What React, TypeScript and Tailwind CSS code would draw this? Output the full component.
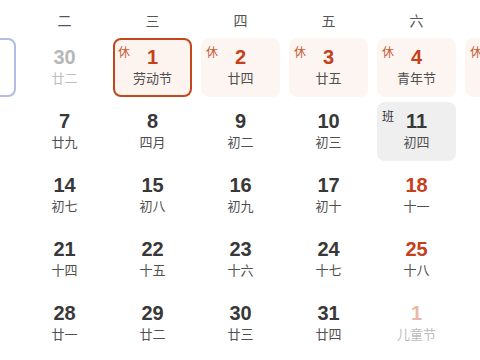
import React from 'react';

type Day = {
  num: string;
  lunar: string;
  tag?: '休' | '班';
  kind?: 'selected' | 'today' | 'holiday' | 'work' | 'other';
  red?: boolean;
};

const weekNames = ['一', '二', '三', '四', '五', '六', '日'];

const rows: Day[][] = [
  [
    { num: '29', lunar: '廿一', kind: 'today' },
    { num: '30', lunar: '廿二', kind: 'other' },
    { num: '1', lunar: '劳动节', tag: '休', kind: 'selected', red: true },
    { num: '2', lunar: '廿四', tag: '休', kind: 'holiday', red: true },
    { num: '3', lunar: '廿五', tag: '休', kind: 'holiday', red: true },
    { num: '4', lunar: '青年节', tag: '休', kind: 'holiday', red: true },
    { num: '5', lunar: '立夏', tag: '休', kind: 'holiday', red: true },
  ],
  [
    { num: '6', lunar: '廿八' },
    { num: '7', lunar: '廿九' },
    { num: '8', lunar: '四月' },
    { num: '9', lunar: '初二' },
    { num: '10', lunar: '初三' },
    { num: '11', lunar: '初四', tag: '班', kind: 'work' },
    { num: '12', lunar: '母亲节', red: true },
  ],
  [
    { num: '13', lunar: '初六' },
    { num: '14', lunar: '初七' },
    { num: '15', lunar: '初八' },
    { num: '16', lunar: '初九' },
    { num: '17', lunar: '初十' },
    { num: '18', lunar: '十一', red: true },
    { num: '19', lunar: '十二', red: true },
  ],
  [
    { num: '20', lunar: '小满' },
    { num: '21', lunar: '十四' },
    { num: '22', lunar: '十五' },
    { num: '23', lunar: '十六' },
    { num: '24', lunar: '十七' },
    { num: '25', lunar: '十八', red: true },
    { num: '26', lunar: '十九', red: true },
  ],
  [
    { num: '27', lunar: '二十' },
    { num: '28', lunar: '廿一' },
    { num: '29', lunar: '廿二' },
    { num: '30', lunar: '廿三' },
    { num: '31', lunar: '廿四' },
    { num: '1', lunar: '儿童节', kind: 'other', red: true },
    { num: '2', lunar: '廿六', kind: 'other', red: true },
  ],
];

const cardStyle: Record<string, string> = {
  selected: 'border-[#c4461c] bg-[#fdf4ef]',
  today: 'border-[#b3bce6] bg-white',
  holiday: 'border-transparent bg-[#fdf5f1]',
  work: 'border-transparent bg-[#efefef]',
  other: 'border-transparent bg-white',
  none: 'border-transparent bg-white',
};

const DayCell = ({ d }: { d: Day }) => {
  const kind = d.kind ?? 'none';
  let numColor = d.red ? 'text-[#c6401b]' : 'text-[#383838]';
  let lunarColor = 'text-[#4f4f4f]';
  if (kind === 'other') {
    numColor = d.red ? 'text-[#eab8ab]' : 'text-[#b8b8b8]';
    lunarColor = 'text-[#bdbdbd]';
  }
  return (
    <div className={`relative h-[59px] rounded-lg border-2 ${cardStyle[kind]} flex flex-col items-center pt-[5px]`}>
      {d.tag && (
        <span
          className={`absolute left-[3px] top-[6px] text-[12px] leading-[14px] ${
            d.tag === '休' ? 'text-[#c55a36]' : 'text-[#333]'
          }`}
        >
          {d.tag}
        </span>
      )}
      <span className={`text-[20px] leading-[24px] font-bold ${numColor}`}>{d.num}</span>
      <span className={`text-[13px] leading-[20px] ${lunarColor}`}>{d.lunar}</span>
    </div>
  );
};

export default function App() {
  return (
    <div
      className="w-[480px] h-[360px] overflow-hidden bg-white"
      style={{ fontFamily: '"Liberation Sans", "Noto Sans CJK SC", sans-serif' }}
    >
      <div className="ml-[-63px] w-[607px]">
        <div className="grid grid-cols-[repeat(7,79px)] gap-x-[9px] h-[38px] pt-[11px]">
          {weekNames.map((w) => (
            <div key={w} className="text-center text-[14px] leading-[20px] text-[#555]">
              {w}
            </div>
          ))}
        </div>
        <div className="grid grid-cols-[repeat(7,79px)] gap-x-[9px] gap-y-[5px]">
          {rows.flat().map((d, i) => (
            <DayCell key={i} d={d} />
          ))}
        </div>
      </div>
    </div>
  );
}
